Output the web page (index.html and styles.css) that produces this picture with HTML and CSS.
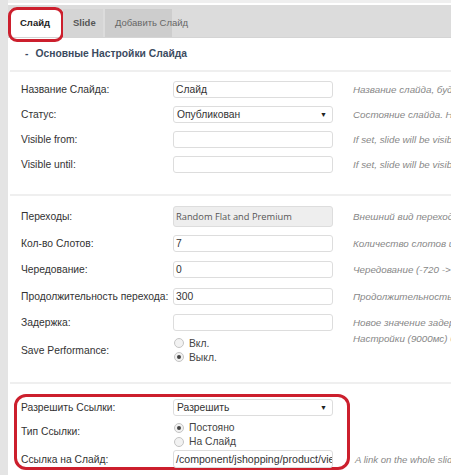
FILE: index.html
```html
<!DOCTYPE html>
<html lang="ru">
<head>
    <meta charset="UTF-8">
    <meta name="viewport" content="width=device-width, initial-scale=1.0">
    <title>Слайд</title>
    <link rel="stylesheet" href="styles.css">
</head>
<body>
    <div class="page">
        <div class="sidebar"></div>
        <div class="main">
            <div class="topline"></div>
            <div class="tabs">
                <div class="tab active">Слайд<span class="mark mark-tab"></span></div>
                <div class="tab tab-slide">Slide</div>
                <div class="tab tab-add">Добавить Слайд</div>
            </div>

            <h3 class="section-title"><span class="dash">-</span>Основные Настройки Слайда</h3>

            <div class="block block-main">
                <div class="row">
                    <div class="label">Название Слайда:</div>
                    <div class="field">Слайд</div>
                    <div class="help">Название слайда, будут видны только в административной панели</div>
                </div>
                <div class="row">
                    <div class="label">Статус:</div>
                    <div class="field select">Опубликован<span class="arrow">&#9660;</span></div>
                    <div class="help">Состояние слайда. Не опубликованные слайды не будут показаны</div>
                </div>
                <div class="row">
                    <div class="label">Visible from:</div>
                    <div class="field"></div>
                    <div class="help">If set, slide will be visible after the date is reached</div>
                </div>
                <div class="row">
                    <div class="label">Visible until:</div>
                    <div class="field"></div>
                    <div class="help">If set, slide will be visible till the date is reached</div>
                </div>
            </div>

            <div class="block block-anim">
                <div class="row tall">
                    <div class="label">Переходы:</div>
                    <div class="field readonly">Random Flat and Premium</div>
                    <div class="help">Внешний вид переходов этого слайда</div>
                </div>
                <div class="row tall">
                    <div class="label">Кол-во Слотов:</div>
                    <div class="field">7</div>
                    <div class="help">Количество слотов или коробок в переходе</div>
                </div>
                <div class="row tall">
                    <div class="label">Чередование:</div>
                    <div class="field">0</div>
                    <div class="help">Чередование (-720 -&gt; 720, 999 = случайно)</div>
                </div>
                <div class="row tall">
                    <div class="label">Продолжительность перехода:</div>
                    <div class="field">300</div>
                    <div class="help">Продолжительность перехода в миллисекундах</div>
                </div>
                <div class="row tall">
                    <div class="label">Задержка:</div>
                    <div class="field"></div>
                    <div class="help two-lines">Новое значение задержки для текущего слайда. Если не задано, будет использоваться<br>Настройки (9000мс) будут использоваться по умолчанию</div>
                </div>
                <div class="row perf">
                    <div class="label">Save Performance:</div>
                    <div class="radios">
                        <div class="radio"><span class="dot"></span>Вкл.</div>
                        <div class="radio"><span class="dot checked"></span>Выкл.</div>
                    </div>
                </div>
            </div>

            <div class="block block-link">
                <span class="mark mark-links"></span>
                <div class="row">
                    <div class="label">Разрешить Ссылки:</div>
                    <div class="field select">Разрешить<span class="arrow">&#9660;</span></div>
                </div>
                <div class="row link-type">
                    <div class="label">Тип Ссылки:</div>
                    <div class="radios">
                        <div class="radio"><span class="dot checked"></span>Постояно</div>
                        <div class="radio"><span class="dot"></span>На Слайд</div>
                    </div>
                </div>
                <div class="row link-url">
                    <div class="label">Ссылка на Слайд:</div>
                    <div class="field url">/component/jshopping/product/view</div>
                    <div class="help link-help">A link on the whole slide pic</div>
                </div>
            </div>
        </div>
    </div>
</body>
</html>
```

FILE: styles.css
```css
body {
    margin: 0;
    font-family: "Liberation Sans", Arial, sans-serif;
    font-size: 10.3px;
    color: #333;
    background-color: #fff;
    overflow: hidden;
}
.page {
    display: flex;
    height: 475px;
}
.sidebar {
    width: 8px;
    flex-shrink: 0;
    background-color: #e4e4e4;
}
.main {
    flex: 1;
    overflow: hidden;
}
.topline {
    height: 3px;
    margin-bottom: 2px;
    background-color: #efefef;
}
.tabs {
    height: 32px;
    display: flex;
    align-items: flex-end;
    gap: 2px;
    padding-left: 2px;
    background-color: #dcdcdc;
    border-bottom: 1px solid #d4d4d4;
}
.tab {
    position: relative;
    height: 28px;
    line-height: 28px;
    box-sizing: border-box;
    padding-left: 10px;
    font-size: 9.5px;
    font-weight: bold;
    color: #555;
    background-color: #d5d5d5;
    white-space: nowrap;
}
.tab.active {
    width: 51px;
    background-color: #fff;
    color: #222;
}
.tab-slide {
    width: 40px;
}
.tab-add {
    width: 67px;
    font-weight: normal;
    color: #666;
    background-color: #cdcdcd;
}
.mark {
    position: absolute;
    border: 3px solid #cc1f2d;
    pointer-events: none;
}
.mark-tab {
    left: -2px;
    top: -2px;
    right: -3px;
    bottom: -5px;
    border-radius: 9px;
}
.section-title {
    margin: 0;
    height: 32px;
    line-height: 32px;
    padding-left: 17px;
    font-size: 10.3px;
    font-weight: bold;
    color: #3b4b5f;
}
.dash {
    margin-right: 7px;
}
.block {
    position: relative;
    margin-left: 2px;
    padding-left: 11px;
    border-top: 2px solid #efefef;
}
.block-main {
    padding-top: 4.5px;
    padding-bottom: 17px;
}
.block-anim {
    padding-top: 7.75px;
    padding-bottom: 17px;
}
.block-link {
    padding-top: 11px;
}
.row {
    display: flex;
    align-items: center;
    height: 25px;
    white-space: nowrap;
}
.row.tall {
    height: 26.5px;
}
.row.perf {
    height: 29px;
}
.row.link-type {
    height: 30px;
}
.row.link-type .label {
    padding-bottom: 6px;
}
.row.link-url {
    height: 19px;
}
.label {
    width: 152px;
    flex-shrink: 0;
    color: #333;
}
.field {
    position: relative;
    width: 160px;
    height: 17px;
    line-height: 15px;
    flex-shrink: 0;
    box-sizing: border-box;
    padding-left: 2px;
    border: 1px solid #ddd;
    border-radius: 3px;
    background-color: #fff;
    color: #333;
    overflow: hidden;
}
.field.select {
    padding-left: 3px;
}
.field.url {
    height: 18px;
    line-height: 16px;
    font-size: 10.6px;
}
.arrow {
    position: absolute;
    right: 5px;
    top: 0;
    font-size: 7px;
    color: #222;
}
.field.readonly {
    height: 21px;
    line-height: 19px;
    font-family: "Open Sans", sans-serif;
    font-size: 9.3px;
    color: #555;
    background-color: #eee;
}
.help {
    margin-left: 20px;
    font-size: 9.8px;
    font-style: italic;
    color: #888;
}
.help.two-lines {
    align-self: flex-start;
    margin-top: 6px;
    line-height: 16px;
}
.link-help {
    margin-left: 22px;
    font-size: 9.6px;
}
.radios {
    margin-left: 1px;
}
.radio {
    display: flex;
    align-items: center;
    height: 14px;
    color: #444;
}
.dot {
    position: relative;
    width: 10px;
    height: 10px;
    margin-right: 5px;
    box-sizing: border-box;
    border: 1px solid #c4c4c4;
    border-radius: 50%;
    background-color: #f2f2f2;
}
.dot.checked::after {
    content: "";
    position: absolute;
    left: 2px;
    top: 2px;
    width: 4px;
    height: 4px;
    border-radius: 50%;
    background-color: #444;
}
.mark-links {
    left: 4px;
    top: 10px;
    width: 336px;
    height: 76px;
    box-sizing: border-box;
    border-radius: 12px;
}
```
